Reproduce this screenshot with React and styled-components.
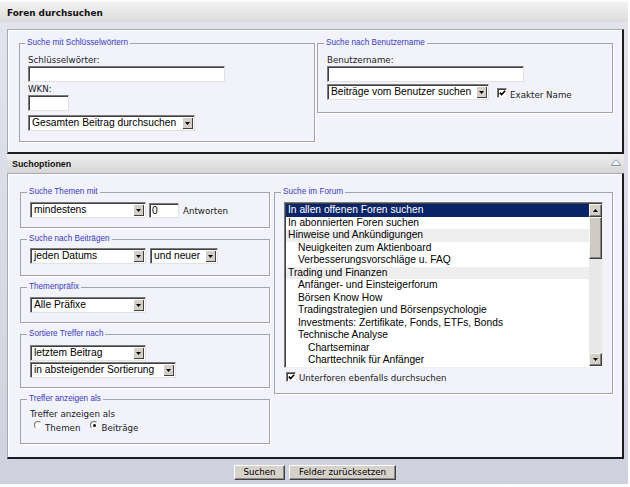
import React from "react";
import styled, { createGlobalStyle } from "styled-components";

const VERDANA = `"DejaVu Sans", Verdana, sans-serif`;
const ARIAL = `"Liberation Sans", Arial, sans-serif`;

const GlobalStyle = createGlobalStyle`
  html, body { margin: 0; padding: 0; background: #ffffff; }
  body { font-family: ${VERDANA}; }
  * { box-sizing: border-box; }
`;

const Frame = styled.div`
  width: 628px;
  height: 484px;
  background: linear-gradient(#e4e4ee, #d0d1de);
  display: flex;
  flex-direction: column;
`;

const TitleBar = styled.h1`
  margin: 0;
  height: 22px;
  padding: 4px 0 0 7px;
  background: linear-gradient(#ffffff 0px, #f1f1f1 3px, #dcdcdc 22px);
  font: bold 8.9px/18px ${VERDANA};
  color: #111;
`;

const Panel = styled.div`
  margin: ${(p) => p.$mt}px 4px 0 7px;
  height: ${(p) => p.$h}px;
  flex: none;
  background: #f2f2fa;
  border-top: 1px solid #a9a9b4;
  border-left: 1px solid #a9a9b4;
  border-right: 2px solid #1c1c1c;
  border-bottom: 2px solid #1c1c1c;
  box-shadow: inset 1px 1px 0 #ffffff;
  padding: ${(p) => p.$pad};
  display: grid;
  grid-template-columns: ${(p) => p.$cols};
  column-gap: ${(p) => p.$gap}px;
  align-items: start;
`;

const SectionBar = styled.div`
  margin: 0 4px 0 7px;
  height: 19px;
  flex: none;
  background: linear-gradient(#eeeeee, #d6d6d6);
  display: flex;
  justify-content: space-between;
  align-items: flex-start;
  padding: 2px 3px 0 5px;
`;

const SectionTitle = styled.h2`
  margin: 0;
  font: bold 8.9px/17px ${ARIAL};
  color: #111;
`;

const CollapseIcon = styled.svg`
  margin-top: 3px;
  flex: none;
`;

const Group = styled.fieldset`
  margin: 0;
  min-width: 0;
  padding: ${(p) => p.$pad || "5px 8px 9px 9px"};
  border: 1px solid #a4a4a4;
  box-shadow: 1px 1px 0 #ffffff;
`;

const Legend = styled.legend`
  margin-left: -3px;
  padding: 0 2px;
  font: 8.2px/10px ${ARIAL};
  color: #3b3bc0;
`;

const FieldLabel = styled.label`
  display: block;
  font: 8.7px/11px ${VERDANA};
  color: #1a1a1a;
  margin-top: ${(p) => p.$mt || 0}px;
`;

const TextInput = styled.input`
  display: block;
  flex: none;
  width: ${(p) => p.$w}px;
  height: ${(p) => p.$h || 16}px;
  margin: 0 0 0 ${(p) => p.$ml || 0}px;
  padding: 0 2px;
  border: 1px solid;
  border-color: #7b7b7b #e2e2e2 #e2e2e2 #7b7b7b;
  box-shadow: inset 1px 1px 0 #404040;
  background: #ffffff;
  font: 10.25px ${ARIAL};
  color: #000;
  outline: none;
`;

const SelectBox = styled.div`
  display: flex;
  flex: none;
  width: ${(p) => p.$w}px;
  height: 16px;
  margin-top: ${(p) => p.$mt || 0}px;
  padding: 1px;
  background: #ffffff;
  border: 1px solid;
  border-color: #7b7b7b #e2e2e2 #e2e2e2 #7b7b7b;
  box-shadow: inset 1px 1px 0 #404040;
`;

const SelectText = styled.span`
  flex: 1;
  padding-left: 2px;
  font: 10.25px/12px ${ARIAL};
  color: #000;
  white-space: nowrap;
  overflow: hidden;
`;

const SelectArrow = styled.span`
  width: 11px;
  flex: none;
  display: flex;
  align-items: center;
  justify-content: center;
  background: #d4d0c8;
  box-shadow: inset 1px 1px 0 #ffffff, inset -1px -1px 0 #404040;
`;

const Row = styled.div`
  display: flex;
  align-items: ${(p) => p.$align || "center"};
  gap: ${(p) => p.$gap || 0}px;
  margin-top: ${(p) => p.$mt || 0}px;
  padding-left: ${(p) => p.$pl || 0}px;
`;

const Stack = styled.div`
  display: flex;
  flex-direction: column;
  gap: ${(p) => p.$gap}px;
`;

const InlineText = styled.span`
  font: 8.7px/11px ${VERDANA};
  color: #1a1a1a;
  white-space: nowrap;
  margin-left: ${(p) => p.$ml || 0}px;
  margin-top: ${(p) => p.$mt || 0}px;
`;

const CheckBoxBox = styled.span`
  display: inline-flex;
  flex: none;
  width: 10px;
  height: 10px;
  margin-left: ${(p) => p.$ml || 0}px;
  margin-top: ${(p) => p.$mt || 0}px;
  align-items: center;
  justify-content: center;
  background: #ffffff;
  border: 1px solid;
  border-color: #7b7b7b #efefef #efefef #7b7b7b;
  box-shadow: inset 1px 1px 0 #404040;
`;

const RadioCircle = styled.span`
  display: inline-flex;
  flex: none;
  width: 8px;
  height: 8px;
  border-radius: 50%;
  margin-left: ${(p) => p.$ml || 0}px;
  align-items: center;
  justify-content: center;
  background: #ffffff;
  border: 1px solid;
  border-color: #6f6f6f #f2f2f2 #f2f2f2 #6f6f6f;
`;

const RadioDot = styled.span`
  width: 3px;
  height: 3px;
  border-radius: 50%;
  background: #000;
`;

const ListBox = styled.div`
  width: 319px;
  height: 166px;
  display: flex;
  padding: 1px 0 1px 1px;
  background: #ffffff;
  border: 1px solid;
  border-color: #7b7b7b #efefef #efefef #7b7b7b;
  box-shadow: inset 1px 1px 0 #404040;
`;

const ListItems = styled.div`
  flex: 1;
  overflow: hidden;
`;

const ListItem = styled.div`
  height: 12.5px;
  line-height: 12.5px;
  padding-left: ${(p) => 2 + p.$level * 10}px;
  font-size: 10.25px;
  font-family: ${ARIAL};
  white-space: nowrap;
  background: ${(p) => (p.$selected ? "#0a246a" : p.$cat ? "#eeeeee" : "transparent")};
  color: ${(p) => (p.$selected ? "#ffffff" : "#000000")};
`;

const ScrollBar = styled.div`
  width: 13px;
  flex: none;
  display: flex;
  flex-direction: column;
  background: #e8e8e8;
`;

const ScrollButton = styled.div`
  height: 13px;
  flex: none;
  display: flex;
  align-items: center;
  justify-content: center;
  background: #d4d0c8;
  border: 1px solid;
  border-color: #f4f4f4 #404040 #404040 #f4f4f4;
  box-shadow: inset -1px -1px 0 #808080;
`;

const ScrollTrack = styled.div`
  flex: 1;
`;

const ScrollThumb = styled.div`
  height: 42px;
  background: #cfcbc3;
  border: 1px solid;
  border-color: #f4f4f4 #404040 #404040 #f4f4f4;
  box-shadow: inset -1px -1px 0 #808080;
`;

const Footer = styled.div`
  flex: 1;
  display: flex;
  justify-content: center;
  align-items: flex-start;
  gap: 4px;
  padding: 6px 0 0 2px;
`;

const Button = styled.button`
  width: ${(p) => p.$w}px;
  height: 15px;
  margin: 0;
  padding: 0;
  font: 8.7px/13px ${VERDANA};
  color: #000;
  background: #d6d2ca;
  border: 1px solid;
  border-color: #ffffff #404040 #404040 #ffffff;
  box-shadow: inset -1px -1px 0 #8a8a8a;
`;

const Arrow = ({ up }) => (
  <svg width="5" height="3" viewBox="0 0 5 3">
    <polygon points={up ? "0,3 5,3 2.5,0" : "0,0 5,0 2.5,3"} fill="#000" />
  </svg>
);

const Select = ({ w, mt, children }) => (
  <SelectBox $w={w} $mt={mt}>
    <SelectText>{children}</SelectText>
    <SelectArrow>
      <Arrow />
    </SelectArrow>
  </SelectBox>
);

const CheckBox = ({ ml, mt }) => (
  <CheckBoxBox $ml={ml} $mt={mt}>
    <svg width="7" height="6" viewBox="0 0 7 6">
      <path d="M0.8 2.6 L2.6 4.5 L6.2 0.8" fill="none" stroke="#000" strokeWidth="1.6" />
    </svg>
  </CheckBoxBox>
);

const Radio = ({ checked, ml }) => (
  <RadioCircle $ml={ml}>{checked && <RadioDot />}</RadioCircle>
);

const forums = [
  { t: "In allen offenen Foren suchen", l: 0, sel: true },
  { t: "In abonnierten Foren suchen", l: 0 },
  { t: "Hinweise und Ankündigungen", l: 0, cat: true },
  { t: "Neuigkeiten zum Aktienboard", l: 1 },
  { t: "Verbesserungsvorschläge u. FAQ", l: 1 },
  { t: "Trading und Finanzen", l: 0, cat: true },
  { t: "Anfänger- und Einsteigerforum", l: 1 },
  { t: "Börsen Know How", l: 1 },
  { t: "Tradingstrategien und Börsenpsychologie", l: 1 },
  { t: "Investments: Zertifikate, Fonds, ETFs, Bonds", l: 1 },
  { t: "Technische Analyse", l: 1 },
  { t: "Chartseminar", l: 2 },
  { t: "Charttechnik für Anfänger", l: 2 },
];

export default function App() {
  return (
    <>
      <GlobalStyle />
      <Frame>
        <TitleBar>Foren durchsuchen</TitleBar>

        <Panel $mt={7} $h={125} $pad="8px 9px 0 11px" $cols="296px 296px" $gap={2}>
          <Group $pad="7px 8px 10px 8px">
            <Legend>Suche mit Schlüsselwörtern</Legend>
            <FieldLabel>Schlüsselwörter:</FieldLabel>
            <TextInput $w={197} />
            <FieldLabel $mt={2}>WKN:</FieldLabel>
            <TextInput $w={41} />
            <Select w={167} mt={4}>Gesamten Beitrag durchsuchen</Select>
          </Group>
          <Group $pad="7px 8px 11px 9px">
            <Legend>Suche nach Benutzername</Legend>
            <FieldLabel>Benutzername:</FieldLabel>
            <TextInput $w={197} />
            <Row $align="flex-start" $mt={2}>
              <Select w={162}>Beiträge vom Benutzer suchen</Select>
              <CheckBox ml={8} mt={4} />
              <InlineText $ml={3} $mt={6}>Exakter Name</InlineText>
            </Row>
          </Group>
        </Panel>

        <SectionBar>
          <SectionTitle>Suchoptionen</SectionTitle>
          <CollapseIcon width="10" height="7" viewBox="0 0 10 7">
            <path d="M0.5 6.5 C2 4 3.5 1 5 1 C6.5 1 8 4 9.5 6.5 Z" fill="#f6f8fc" stroke="#8793a8" strokeWidth="1" />
          </CollapseIcon>
        </SectionBar>

        <Panel $mt={0} $h={286} $pad="13px 9px 0 12px" $cols="250px 339px" $gap={4}>
          <Stack $gap={6}>
            <Group>
              <Legend>Suche Themen mit</Legend>
              <Row>
                <Select w={116}>mindestens</Select>
                <TextInput $w={30} $h={15} $ml={3} defaultValue="0" />
                <InlineText $ml={4} $mt={2}>Antworten</InlineText>
              </Row>
            </Group>
            <Group $pad="4px 8px 11px 9px">
              <Legend>Suche nach Beiträgen</Legend>
              <Row $gap={4}>
                <Select w={116}>jeden Datums</Select>
                <Select w={68}>und neuer</Select>
              </Row>
            </Group>
            <Group>
              <Legend>Themenpräfix</Legend>
              <Select w={116}>Alle Präfixe</Select>
            </Group>
            <Group $pad="6px 8px 9px 9px">
              <Legend>Sortiere Treffer nach</Legend>
              <Select w={116}>letztem Beitrag</Select>
              <Select w={146} mt={1}>in absteigender Sortierung</Select>
            </Group>
            <Group $pad="5px 8px 9px 9px">
              <Legend>Treffer anzeigen als</Legend>
              <FieldLabel>Treffer anzeigen als</FieldLabel>
              <Row $align="flex-start" $pl={4} $mt={1}>
                <Radio />
                <InlineText $ml={3} $mt={2}>Themen</InlineText>
                <Radio checked ml={10} />
                <InlineText $ml={3} $mt={2}>Beiträge</InlineText>
              </Row>
            </Group>
          </Stack>

          <Group $pad="5px 9px 9px 9px">
            <Legend>Suche im Forum</Legend>
            <ListBox>
              <ListItems>
                {forums.map((f) => (
                  <ListItem key={f.t} $level={f.l} $cat={f.cat} $selected={f.sel}>
                    {f.t}
                  </ListItem>
                ))}
              </ListItems>
              <ScrollBar>
                <ScrollButton>
                  <Arrow up />
                </ScrollButton>
                <ScrollTrack>
                  <ScrollThumb />
                </ScrollTrack>
                <ScrollButton>
                  <Arrow />
                </ScrollButton>
              </ScrollBar>
            </ListBox>
            <Row $align="flex-start" $mt={4} $pl={2}>
              <CheckBox />
              <InlineText $ml={3} $mt={1}>Unterforen ebenfalls durchsuchen</InlineText>
            </Row>
          </Group>
        </Panel>

        <Footer>
          <Button $w={51}>Suchen</Button>
          <Button $w={107}>Felder zurücksetzen</Button>
        </Footer>
      </Frame>
    </>
  );
}
